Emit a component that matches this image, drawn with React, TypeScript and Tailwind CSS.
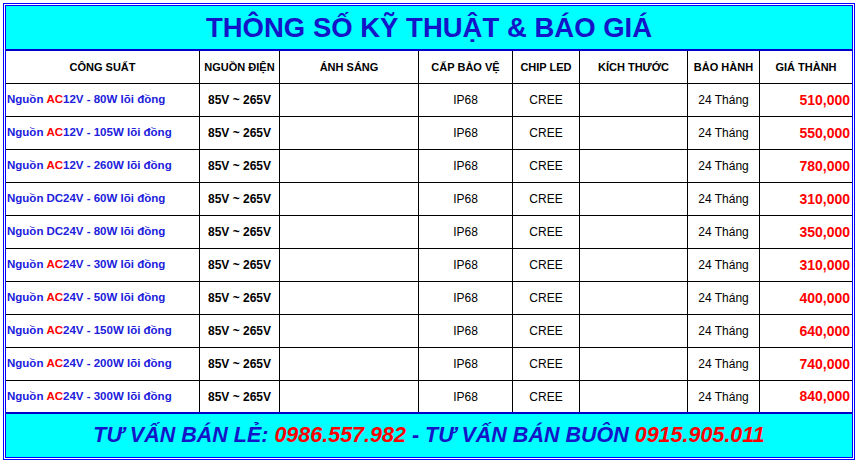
import React from 'react';

type Row = {
  type: 'AC' | 'DC';
  spec: string;
  price: string;
};

const rows: Row[] = [
  { type: 'AC', spec: '12V - 80W lõi đồng', price: '510,000' },
  { type: 'AC', spec: '12V - 105W lõi đồng', price: '550,000' },
  { type: 'AC', spec: '12V - 260W lõi đồng', price: '780,000' },
  { type: 'DC', spec: '24V - 60W lõi đồng', price: '310,000' },
  { type: 'DC', spec: '24V - 80W lõi đồng', price: '350,000' },
  { type: 'AC', spec: '24V - 30W lõi đồng', price: '310,000' },
  { type: 'AC', spec: '24V - 50W lõi đồng', price: '400,000' },
  { type: 'AC', spec: '24V - 150W lõi đồng', price: '640,000' },
  { type: 'AC', spec: '24V - 200W lõi đồng', price: '740,000' },
  { type: 'AC', spec: '24V - 300W lõi đồng', price: '840,000' },
];

const headers = [
  'CÔNG SUẤT',
  'NGUỒN ĐIỆN',
  'ÁNH SÁNG',
  'CẤP BẢO VỆ',
  'CHIP LED',
  'KÍCH THƯỚC',
  'BẢO HÀNH',
  'GIÁ THÀNH',
];

const cols = 'grid grid-cols-[193px_80px_139px_94px_67px_108px_72px_93px]';
const cell = 'border-l border-black flex items-center justify-center';

export default function App() {
  return (
    <div className="w-[857px] h-[463px] bg-white overflow-hidden font-['Liberation_Sans',Arial,sans-serif]">
      <div className="ml-[3px] mt-[3px] w-[852px] border border-[#0000ff] p-[1px]">
        <div className="border border-[#0000ff]">
          {/* title */}
          <div className="h-[45px] bg-[#00ffff] border-b-2 border-[#0000c8] flex items-center justify-center">
            <span className="text-[27.5px] font-bold text-[#1414c8] leading-none">
              THÔNG SỐ KỸ THUẬT &amp; BÁO GIÁ
            </span>
          </div>

          {/* header row */}
          <div className={`${cols} h-[33px] border-b border-black`}>
            {headers.map((h, i) => (
              <div
                key={h}
                className={`${i === 0 ? 'flex items-center justify-center' : cell} text-[11px] font-bold text-black`}
              >
                {h}
              </div>
            ))}
          </div>

          {/* data rows */}
          {rows.map((r, i) => (
            <div
              key={i}
              className={`${cols} h-[33px] ${
                i === rows.length - 1 ? 'border-b-2 border-[#0000c8]' : 'border-b border-black'
              }`}
            >
              <div className="flex items-center pl-[1px] text-[11.5px] font-bold text-[#2020dc] whitespace-nowrap">
                Nguồn{' '}
                {r.type === 'AC' ? (
                  <span className="text-[#ff0000] ml-[3px]">AC</span>
                ) : (
                  <span className="ml-[3px]">DC</span>
                )}
                {r.spec}
              </div>
              <div className={`${cell} text-[12px] font-bold text-black`}>85V ~ 265V</div>
              <div className={cell}></div>
              <div className={`${cell} text-[12px] text-black`}>IP68</div>
              <div className={`${cell} text-[12px] text-black`}>CREE</div>
              <div className={cell}></div>
              <div className={`${cell} text-[12px] text-black`}>24 Tháng</div>
              <div className="border-l border-black flex items-center justify-end pr-[2px] text-[14px] font-bold text-[#ff0000]">
                {r.price}
              </div>
            </div>
          ))}

          {/* footer */}
          <div className="h-[43px] bg-[#00ffff] flex items-center justify-center">
            <span className="text-[21.5px] font-bold italic leading-none whitespace-pre">
              <span className="text-[#1414c8]">TƯ VẤN BÁN LẺ: </span>
              <span className="text-[#ff0000]">0986.557.982</span>
              <span className="text-[#1414c8]"> - TƯ VẤN BÁN BUÔN </span>
              <span className="text-[#ff0000]">0915.905.011</span>
            </span>
          </div>
        </div>
      </div>
    </div>
  );
}
